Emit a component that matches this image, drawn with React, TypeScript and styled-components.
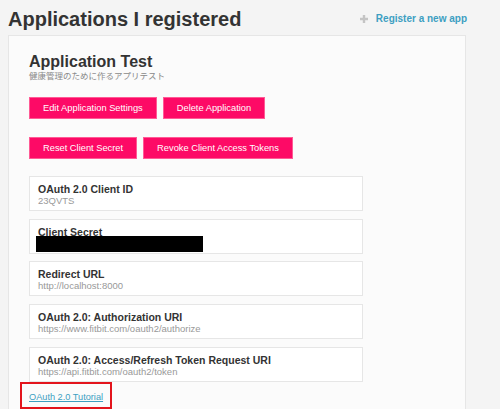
import React from 'react'
import styled, { createGlobalStyle } from 'styled-components';

const GlobalStyle = createGlobalStyle`
  body {
    margin: 0;
    background: #f4f4f4;
    font-family: "Liberation Sans", Arial, "Noto Sans CJK JP", sans-serif;
  }
`;

const fields = [
  { label: 'OAuth 2.0 Client ID', value: '23QVTS' },
  { label: 'Client Secret', secret: true },
  { label: 'Redirect URL', value: 'http://localhost:8000' },
  { label: 'OAuth 2.0: Authorization URI', value: 'https://www.fitbit.com/oauth2/authorize' },
  { label: 'OAuth 2.0: Access/Refresh Token Request URI', value: 'https://api.fitbit.com/oauth2/token' },
];

const App: React.FC = () => {
  return (
    <Page>
      <GlobalStyle />
      <Header>
        <Title>Applications I registered</Title>
        <RegisterLink href="#register">
          <svg width="10" height="10" viewBox="0 0 10 10">
            <path d="M5 1v8M1 5h8" stroke="#c4c4c4" strokeWidth="2.4" />
          </svg>
          Register a new app
        </RegisterLink>
      </Header>
      <Card>
        <AppName>Application Test</AppName>
        <AppDesc>健康管理のために作るアプリテスト</AppDesc>
        <ButtonRow>
          <PinkButton>Edit Application Settings</PinkButton>
          <PinkButton>Delete Application</PinkButton>
        </ButtonRow>
        <ButtonRow>
          <PinkButton>Reset Client Secret</PinkButton>
          <PinkButton>Revoke Client Access Tokens</PinkButton>
        </ButtonRow>
        <FieldList>
          {fields.map((f) => (
            <Field key={f.label}>
              <FieldLabel>{f.label}</FieldLabel>
              {f.secret ? <Redacted /> : <FieldValue>{f.value}</FieldValue>}
            </Field>
          ))}
        </FieldList>
        <Highlight>
          <TutorialLink href="#tutorial">OAuth 2.0 Tutorial</TutorialLink>
        </Highlight>
      </Card>
    </Page>
  );
}

const Page = styled.div`
  width: 458px;
  padding: 0 8px;
`;

const Header = styled.div`
  display: flex;
  justify-content: space-between;
  align-items: flex-start;
  height: 35px;
`;

const Title = styled.h1`
  margin: 7px 0 0;
  font-size: 20px;
  line-height: 24px;
  font-weight: 700;
  color: #333;
`;

const RegisterLink = styled.a`
  display: flex;
  align-items: center;
  gap: 7px;
  margin-top: 13px;
  margin-right: -1px;
  font-size: 10px;
  line-height: 12px;
  font-weight: 700;
  color: #3d9fc2;
  text-decoration: none;
`;

const Card = styled.div`
  background: #fbfbfb;
  border: 1px solid #e6e6e6;
  padding: 17px 20px 4px;
`;

const AppName = styled.h2`
  margin: 0;
  font-size: 16px;
  line-height: 18px;
  font-weight: 700;
  color: #333;
`;

const AppDesc = styled.p`
  margin: -1px 0 0;
  font-family: "Noto Sans CJK JP", sans-serif;
  font-size: 8.5px;
  line-height: 10px;
  color: #8a8a8a;
`;

const ButtonRow = styled.div`
  display: flex;
  gap: 6px;
  margin-top: 17px;
  & + & {
    margin-top: 18px;
  }
`;

const PinkButton = styled.button`
  height: 22px;
  padding: 0 13px;
  background: #fd0a66;
  border: 1px solid #ff5a95;
  color: #fff;
  font-family: "Liberation Sans", Arial, sans-serif;
  font-size: 9.3px;
  cursor: pointer;
`;

const FieldList = styled.div`
  display: flex;
  flex-direction: column;
  gap: 7.7px;
  width: 334px;
  margin-top: 17px;
`;

const Field = styled.div`
  box-sizing: border-box;
  height: 35px;
  padding: 6px 8px 0;
  background: #fff;
  border: 1px solid #e6e6e6;
`;

const FieldLabel = styled.div`
  font-size: 10.5px;
  line-height: 12px;
  font-weight: 700;
  color: #333;
`;

const FieldValue = styled.div`
  font-size: 9.5px;
  line-height: 11px;
  color: #999;
`;

const Redacted = styled.div`
  width: 167px;
  height: 16px;
  margin: -2px 0 0 -2px;
  background: #000;
`;

const Highlight = styled.div`
  display: inline-block;
  margin: 0 0 0 -9px;
  padding: 2px 7px 3px;
  border: 2px solid #e3141c;
`;

const TutorialLink = styled.a`
  font-size: 9.2px;
  line-height: 12px;
  color: #3d9fc2;
  text-decoration: underline;
`;

export default App;
